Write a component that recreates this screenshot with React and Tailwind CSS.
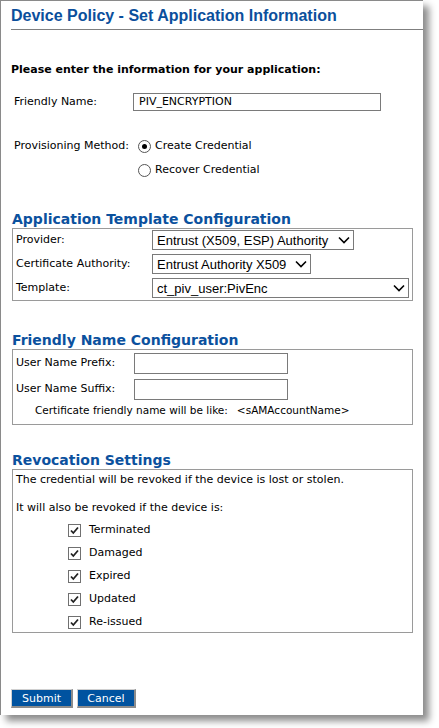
import React from 'react';

const verdana = { fontFamily: '"DejaVu Sans", Verdana, sans-serif' };
const arial = { fontFamily: '"Liberation Sans", Arial, sans-serif' };

const Chevron = () => (
  <svg width="12" height="8" viewBox="0 0 12 8" className="shrink-0">
    <path d="M1 1.5 L6 6.5 L11 1.5" fill="none" stroke="#000" strokeWidth="1.6" />
  </svg>
);

const Select = ({ value, width }) => (
  <div
    className="flex items-center justify-between h-[20px] border border-[#7a7a7a] bg-white pl-[4px] pr-[3px] text-[13px] text-black"
    style={{ ...arial, width }}
  >
    <span className="whitespace-nowrap leading-none">{value}</span>
    <Chevron />
  </div>
);

const Check = ({ label }) => (
  <div className="flex items-center h-[23px] pl-[55px]">
    <span className="w-[13px] h-[13px] border border-[#707070] bg-white flex items-center justify-center">
      <svg width="11" height="11" viewBox="0 0 11 11">
        <path d="M2 5.5 L4.3 8 L9 2.5" fill="none" stroke="#222" strokeWidth="1.8" />
      </svg>
    </span>
    <span className="ml-[8px]">{label}</span>
  </div>
);

const Radio = ({ checked, label }) => (
  <div className="flex items-center h-[24px]">
    <span className="w-[13px] h-[13px] rounded-full border border-[#555] bg-white flex items-center justify-center">
      {checked && <span className="w-[5px] h-[5px] rounded-full bg-black" />}
    </span>
    <span className="ml-[4px]">{label}</span>
  </div>
);

const Heading = ({ children }) => (
  <div className="pl-[11px] text-[14px] font-bold leading-[18px] text-[#0b519e]" style={verdana}>
    {children}
  </div>
);

export default function App() {
  return (
    <div className="min-h-screen bg-white text-[11px] text-black" style={verdana}>
      <div className="w-[423px] h-[715px] bg-white border-l border-t border-[#8a8a8a] shadow-[6px_6px_7px_rgba(0,0,0,0.45)] flex flex-col">
        <div className="ml-[10px] h-[29px] border-b border-[#7f7f7f] pt-[5px] text-[16px] font-bold leading-[20px] text-[#0b4f9c]" style={arial}>
          Device Policy - Set Application Information
        </div>

        <div className="mt-[33px] pl-[10px] font-bold leading-[14px]">
          Please enter the information for your application:
        </div>

        <div className="mt-[16px] flex items-center pl-[13px]">
          <span className="w-[119px]">Friendly Name:</span>
          <div className="w-[248px] h-[18px] border border-[#7a7a7a] flex items-center pl-[5px]">PIV_ENCRYPTION</div>
        </div>

        <div className="mt-[23px] flex pl-[13px]">
          <span className="w-[124px] h-[24px] flex items-center">Provisioning Method:</span>
          <div className="flex flex-col">
            <Radio checked label="Create Credential" />
            <Radio label="Recover Credential" />
          </div>
        </div>

        <div className="mt-[28px]">
          <Heading>Application Template Configuration</Heading>
        </div>
        <div className="ml-[11px] w-[401px] border border-[#9a9a9a] pt-[1px] pb-[2px] flex flex-col gap-[4px]">
          <div className="flex items-center">
            <span className="w-[139px] pl-[3px]">Provider:</span>
            <Select value="Entrust (X509, ESP) Authority" width="202px" />
          </div>
          <div className="flex items-center">
            <span className="w-[139px] pl-[3px]">Certificate Authority:</span>
            <Select value="Entrust Authority X509" width="159px" />
          </div>
          <div className="flex items-center">
            <span className="w-[139px] pl-[3px]">Template:</span>
            <Select value="ct_piv_user:PivEnc" width="257px" />
          </div>
        </div>

        <div className="mt-[30px]">
          <Heading>Friendly Name Configuration</Heading>
        </div>
        <div className="ml-[11px] w-[401px] h-[76px] border border-[#9a9a9a] pt-[3px] flex flex-col">
          <div className="flex items-center h-[21px]">
            <span className="w-[121px] pl-[3px]">User Name Prefix:</span>
            <div className="w-[154px] h-[21px] border border-[#7a7a7a]" />
          </div>
          <div className="flex items-center h-[21px] mt-[5px]">
            <span className="w-[121px] pl-[3px]">User Name Suffix:</span>
            <div className="w-[154px] h-[21px] border border-[#7a7a7a]" />
          </div>
          <div className="flex items-center mt-[2px] pl-[22px] text-[10.5px] leading-[16px]">
            <span>Certificate friendly name will be like:</span>
            <span className="ml-[9px]">&lt;sAMAccountName&gt;</span>
          </div>
        </div>

        <div className="mt-[26px]">
          <Heading>Revocation Settings</Heading>
        </div>
        <div className="ml-[11px] w-[401px] h-[164px] border border-[#9a9a9a] pt-[2px] flex flex-col">
          <div className="pl-[3px] leading-[16px]">The credential will be revoked if the device is lost or stolen.</div>
          <div className="pl-[3px] leading-[16px] mt-[12px]">It will also be revoked if the device is:</div>
          <div className="flex flex-col mt-[3px]">
            <Check label="Terminated" />
            <Check label="Damaged" />
            <Check label="Expired" />
            <Check label="Updated" />
            <Check label="Re-issued" />
          </div>
        </div>

        <div className="mt-[56px] ml-[10px] flex gap-[4px]">
          <button className="w-[62px] h-[19px] bg-[#0053a0] text-white text-[11px] leading-none border-r-2 border-b-2 border-[#8c8c8c] border-l border-t border-l-[#d0d0d0] border-t-[#d0d0d0]" style={verdana}>
            Submit
          </button>
          <button className="w-[59px] h-[19px] bg-[#0053a0] text-white text-[11px] leading-none border-r-2 border-b-2 border-[#8c8c8c] border-l border-t border-l-[#d0d0d0] border-t-[#d0d0d0]" style={verdana}>
            Cancel
          </button>
        </div>
      </div>
    </div>
  );
}
